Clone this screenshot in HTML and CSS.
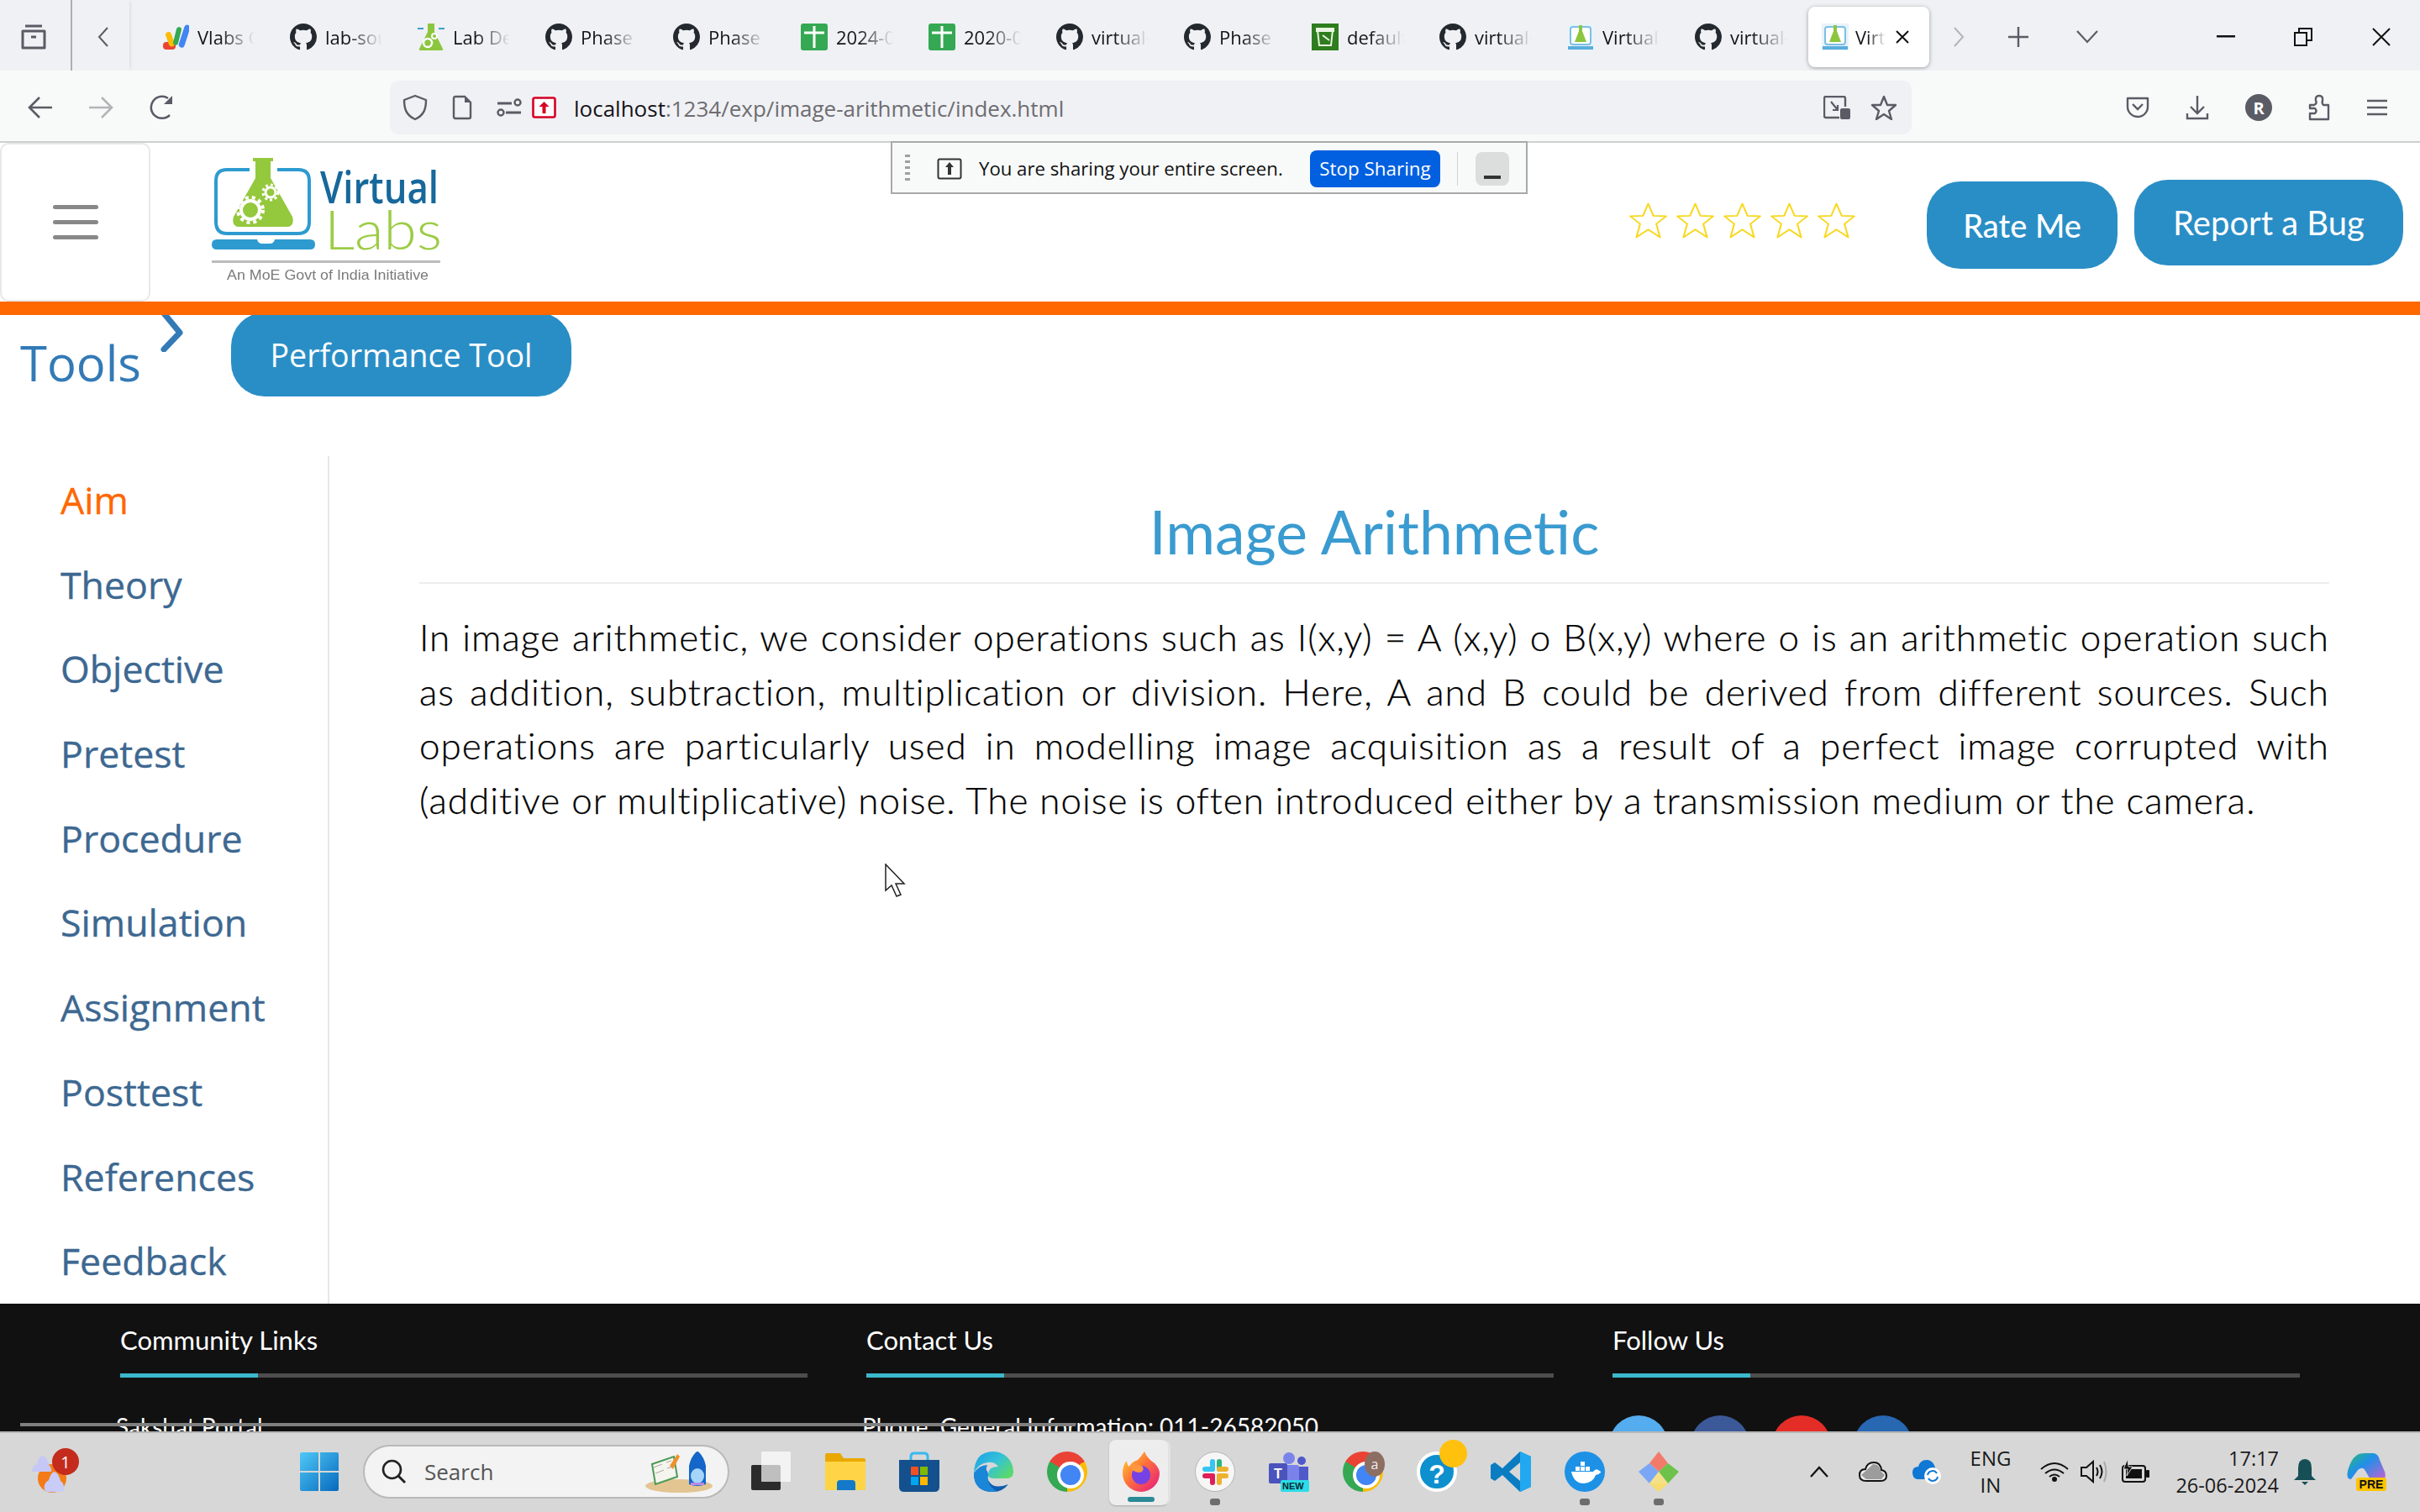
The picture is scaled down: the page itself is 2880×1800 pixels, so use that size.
FILE: index.html
```html
<!DOCTYPE html>
<html lang="en">
<head>
<meta charset="utf-8">
<title>Virtual Labs - Image Arithmetic</title>
<link rel="stylesheet" href="styles.css">
</head>
<body>
<svg class="defs" xmlns="http://www.w3.org/2000/svg">
  <symbol id="gh" viewBox="0 0 16 16"><path fill="#24292f" d="M8 0C3.58 0 0 3.58 0 8c0 3.54 2.29 6.53 5.47 7.59.4.07.55-.17.55-.38 0-.19-.01-.82-.01-1.49-2.01.37-2.53-.49-2.69-.94-.09-.23-.48-.94-.82-1.13-.28-.15-.68-.52-.01-.53.63-.01 1.08.58 1.23.82.72 1.21 1.87.87 2.33.66.07-.52.28-.87.51-1.07-1.78-.2-3.64-.89-3.64-3.95 0-.87.31-1.59.82-2.15-.08-.2-.36-1.02.08-2.12 0 0 .67-.21 2.2.82.64-.18 1.32-.27 2-.27.68 0 1.36.09 2 .27 1.53-1.04 2.2-.82 2.2-.82.44 1.1.16 1.92.08 2.12.51.56.82 1.27.82 2.15 0 3.07-1.87 3.75-3.65 3.95.29.25.54.73.54 1.48 0 1.07-.01 1.93-.01 2.2 0 .21.15.46.55.38A8.013 8.013 0 0016 8c0-4.42-3.58-8-8-8z"/></symbol>
  <symbol id="sheet" viewBox="0 0 32 32"><rect width="32" height="32" rx="3" fill="#34a853"/><path d="M16 3v26M4 11h24" stroke="#fff" stroke-width="3"/></symbol>
  <symbol id="vfav" viewBox="0 0 32 32"><rect width="32" height="32" fill="#e8f3fa"/><rect x="4" y="4" width="24" height="21" rx="3" fill="#fff" stroke="#7cc0e4" stroke-width="2"/><path d="M14 2h4v7l5 13H9l5-13z" fill="#8cc63f"/><rect x="1" y="27" width="30" height="4" fill="#58aede"/></symbol>
  <symbol id="star" viewBox="0 0 40 42" preserveAspectRatio="none"><path d="M20 1.500L25.500 15.500 39 16 28.500 25 32.500 40.500 20 31.500 7.500 40.500 11.500 25 1 16 14.500 15.500z" fill="#fff" stroke="#f9d71c" stroke-width="1.800" stroke-linejoin="round"/></symbol>
</svg>

<div class="window">
  <header class="tabbar">
    <div class="tb-left">
      <svg class="ic list-tabs" viewBox="0 0 30 32"><path d="M5 3h20M2 9h26v20H2zM12 16h6" fill="none" stroke="#5b5b66" stroke-width="3" stroke-linejoin="round"/></svg>
    </div>
    <div class="tb-scroll">
      <svg class="ic" width="14" height="24" viewBox="0 0 14 24"><path d="M12 1L2 12l10 11" fill="none" stroke="#5b5b66" stroke-width="2"/></svg>
    </div>
    <div class="tabs">
      <div class="tab"><svg class="fav" viewBox="0 0 32 32"><rect x="1" y="22" width="15" height="9" rx="4" fill="#ea4335"/><rect x="6" y="10" width="7" height="18" rx="3.500" fill="#fbbc04" transform="rotate(-20 9 19)"/><rect x="15" y="4" width="6" height="22" rx="3" fill="#34a853" transform="rotate(14 18 15)"/><rect x="23" y="1" width="7" height="28" rx="3.500" fill="#4285f4" transform="rotate(18 26 15)"/></svg><span class="tab-label">Vlabs Git</span></div>
      <div class="tab"><svg class="fav"><use href="#gh"/></svg><span class="tab-label">lab-source</span></div>
      <div class="tab"><svg class="fav" viewBox="0 0 32 32"><path d="M12 0h8v10l10 20q1 2-2 2H4q-3 0-2-2l10-20z" fill="#8cc63f"/><path d="M0 6h7M25 6h7" stroke="#3d9fcf" stroke-width="2"/><circle cx="12" cy="23" r="5" fill="none" stroke="#fff" stroke-width="2.500"/><circle cx="20" cy="15" r="3" fill="none" stroke="#fff" stroke-width="2"/></svg><span class="tab-label">Lab Dev</span></div>
      <div class="tab"><svg class="fav"><use href="#gh"/></svg><span class="tab-label">Phase 3</span></div>
      <div class="tab"><svg class="fav"><use href="#gh"/></svg><span class="tab-label">Phase 3</span></div>
      <div class="tab"><svg class="fav"><use href="#sheet"/></svg><span class="tab-label">2024-06</span></div>
      <div class="tab"><svg class="fav"><use href="#sheet"/></svg><span class="tab-label">2020-06</span></div>
      <div class="tab"><svg class="fav"><use href="#gh"/></svg><span class="tab-label">virtual-lab</span></div>
      <div class="tab"><svg class="fav"><use href="#gh"/></svg><span class="tab-label">Phase 3</span></div>
      <div class="tab"><svg class="fav" viewBox="0 0 32 32"><rect width="32" height="32" fill="#2e7d1e"/><path d="M7 8h18l-2 18H9zM6 6h20v3H6zM13 14l8 6" fill="none" stroke="#e8f5e0" stroke-width="2"/></svg><span class="tab-label">default</span></div>
      <div class="tab"><svg class="fav"><use href="#gh"/></svg><span class="tab-label">virtual-lab</span></div>
      <div class="tab"><svg class="fav"><use href="#vfav"/></svg><span class="tab-label">Virtual Labs</span></div>
      <div class="tab"><svg class="fav"><use href="#gh"/></svg><span class="tab-label">virtual-lab</span></div>
      <div class="tab tab-active"><svg class="fav"><use href="#vfav"/></svg><span class="tab-label tab-label-short">Virtual</span><svg class="tab-x" viewBox="0 0 18 18"><path d="M2 2l14 14M16 2L2 16" stroke="#111" stroke-width="2"/></svg></div>
    </div>
    <div class="tb-actions">
      <svg width="14" height="24" viewBox="0 0 14 24"><path d="M2 1l10 11L2 23" fill="none" stroke="#b4b4b8" stroke-width="2"/></svg>
      <svg class="tb-plus" width="26" height="26" viewBox="0 0 26 26"><path d="M13 1v24M1 13h24" stroke="#5b5b66" stroke-width="2.400"/></svg>
      <svg class="tb-down" width="26" height="16" viewBox="0 0 26 16"><path d="M1 1l12 13L25 1" fill="none" stroke="#5b5b66" stroke-width="2.200"/></svg>
    </div>
    <div class="win-controls">
      <svg width="22" height="4" viewBox="0 0 22 4"><rect width="22" height="2.500" fill="#111"/></svg>
      <svg width="22" height="22" viewBox="0 0 22 22"><path d="M1 6h14v15H1zM6 6V1h15v14h-6" fill="none" stroke="#111" stroke-width="2"/></svg>
      <svg width="24" height="24" viewBox="0 0 24 24"><path d="M2 2l20 20M22 2L2 22" stroke="#111" stroke-width="2"/></svg>
    </div>
  </header>

  <nav class="toolbar">
    <svg class="nav-back" width="30" height="28" viewBox="0 0 30 28"><path d="M29 14H3M14 2L2 14l12 12" fill="none" stroke="#5b5b66" stroke-width="2.600"/></svg>
    <svg class="nav-fwd" width="30" height="28" viewBox="0 0 30 28"><path d="M1 14h26M16 2l12 12-12 12" fill="none" stroke="#b4b4b8" stroke-width="2.600"/></svg>
    <svg class="nav-reload" width="30" height="30" viewBox="0 0 30 30"><path d="M24 24A13 13 0 1 1 22 4" fill="none" stroke="#5b5b66" stroke-width="2.600"/><path d="M27 1v10H17z" fill="#5b5b66"/></svg>
    <div class="urlbar">
      <svg width="30" height="32" viewBox="0 0 30 32"><path d="M15 2l13 5c0 10-2 18-13 23C4 25 2 17 2 7z" fill="none" stroke="#5b5b66" stroke-width="2.400" stroke-linejoin="round"/></svg>
      <svg class="url-page" width="24" height="30" viewBox="0 0 24 30"><path d="M2 4q0-2 2-2h11l7 7v17q0 2-2 2H4q-2 0-2-2z" fill="none" stroke="#5b5b66" stroke-width="2.400"/><path d="M15 2v7h7" fill="#5b5b66"/></svg>
      <svg class="url-perm" width="30" height="22" viewBox="0 0 30 22"><path d="M1 6h17M11 17h18" stroke="#5b5b66" stroke-width="3"/><circle cx="25" cy="5" r="3.500" fill="none" stroke="#5b5b66" stroke-width="2.400"/><circle cx="5" cy="17" r="3.500" fill="none" stroke="#5b5b66" stroke-width="2.400"/></svg>
      <svg class="url-share" width="29" height="26" viewBox="0 0 29 26"><rect x="1.500" y="1.500" width="26" height="23" rx="2" fill="#fff" stroke="#d70022" stroke-width="2.600"/><path d="M14.500 6l6 6h-4v8h-4v-8h-4z" fill="#d70022"/></svg>
      <span class="url-text"><span class="url-host">localhost</span>:1234/exp/image-arithmetic/index.html</span>
      <svg class="url-shot" width="32" height="28" viewBox="0 0 32 28"><path d="M19 26H3q-2 0-2-2V3q0-2 2-2h21q2 0 2 2v10" fill="none" stroke="#5b5b66" stroke-width="2.400"/><path d="M9 7l8 10M17 11v6h-6" fill="none" stroke="#5b5b66" stroke-width="2.200"/><rect x="20" y="15" width="12" height="13" rx="2" fill="#5b5b66"/></svg>
      <svg class="url-star" width="32" height="30" viewBox="0 0 32 30"><path d="M16 2l4 10h10l-8 7 3 10-9-6-9 6 3-10-8-7h10z" fill="none" stroke="#5b5b66" stroke-width="2.400" stroke-linejoin="round"/></svg>
    </div>
    <div class="tool-right">
      <svg width="28" height="26" viewBox="0 0 28 26"><path d="M2 2h24v10a12 12 0 0 1-24 0z" fill="none" stroke="#5b5b66" stroke-width="2.400" stroke-linejoin="round"/><path d="M8 9l6 6 6-6" fill="none" stroke="#5b5b66" stroke-width="2.400"/></svg>
      <svg width="28" height="30" viewBox="0 0 28 30"><path d="M14 1v21M6 14l8 8 8-8M2 22v6h24v-6" fill="none" stroke="#5b5b66" stroke-width="2.400"/></svg>
      <span class="avatar">R</span>
      <svg width="26" height="32" viewBox="0 0 26 32"><path d="M2 13h5q4-2 2-5-1-6 4-6 5 0 4 6-1 3 1 5h6v17H2v-7h6q3-3 0-6H2z" fill="none" stroke="#5b5b66" stroke-width="2.400" stroke-linejoin="round"/></svg>
      <svg width="26" height="20" viewBox="0 0 26 20"><path d="M1 2h24M1 10h24M1 18h24" stroke="#5b5b66" stroke-width="2.600"/></svg>
    </div>
  </nav>

  <main class="page">
    <div class="site-header">
      <div class="menu-box"><span class="menu-bars"><i></i><i></i><i></i></span></div>
      <svg class="logo" width="276" height="150" viewBox="0 0 276 150">
        <path d="M45 14H18Q5 14 5 27V76Q5 90 18 90H103Q116 90 116 76V27Q116 14 103 14H78" fill="none" stroke="#2e9bd0" stroke-width="4"/>
        <path d="M49 0h24v4h-3v20l26 46q3 12-7 12H33q-10 0-7-12l26-46V4h-3z" fill="#94c83d"/>
        <circle cx="46" cy="62" r="11" fill="none" stroke="#fff" stroke-width="4"/>
        <circle cx="46" cy="62" r="15" fill="none" stroke="#fff" stroke-width="4" stroke-dasharray="4 4"/>
        <circle cx="70" cy="41" r="6" fill="none" stroke="#fff" stroke-width="3"/>
        <circle cx="70" cy="41" r="9" fill="none" stroke="#fff" stroke-width="3" stroke-dasharray="3 3"/>
        <path d="M6 97h48q1 5 6 5h9q5 0 6-5h42q6 0 6 6t-6 6H6q-6 0-6-6t6-6z" fill="#2e9bd0"/>
        <text class="logo-virtual" x="129" y="54" textLength="141" lengthAdjust="spacingAndGlyphs">Virtual</text>
        <text class="logo-labs" x="134" y="109" textLength="140" lengthAdjust="spacingAndGlyphs">Labs</text>
        <rect y="122" width="272" height="3" fill="#bcbcbc"/>
        <text class="logo-tag" x="18" y="145" textLength="240" lengthAdjust="spacingAndGlyphs">An MoE Govt of India Initiative</text>
      </svg>
      <div class="stars">
        <svg class="star"><use href="#star"/></svg><svg class="star"><use href="#star"/></svg><svg class="star"><use href="#star"/></svg><svg class="star"><use href="#star"/></svg><svg class="star"><use href="#star"/></svg>
      </div>
      <a class="pill pill-rate">Rate Me</a>
      <a class="pill pill-bug">Report a Bug</a>
    </div>
    <div class="orange-rule"></div>
    <div class="tools-row">
      <span class="tools-label">Tools</span>
      <svg class="tools-chevron" width="28" height="44" viewBox="0 0 28 44"><path d="M4 -2L23 21 4 41" fill="none" stroke="#337ab7" stroke-width="7" stroke-linecap="round" stroke-linejoin="round"/></svg>
      <a class="perf-btn">Performance Tool</a>
    </div>
    <div class="lab-body">
      <aside class="side-nav">
        <a class="side-item side-active">Aim</a>
        <a class="side-item">Theory</a>
        <a class="side-item">Objective</a>
        <a class="side-item">Pretest</a>
        <a class="side-item">Procedure</a>
        <a class="side-item">Simulation</a>
        <a class="side-item">Assignment</a>
        <a class="side-item">Posttest</a>
        <a class="side-item">References</a>
        <a class="side-item">Feedback</a>
      </aside>
      <section class="article">
        <h1 class="article-title">Image Arithmetic</h1>
        <p class="article-text">
          <span class="text-line">In image arithmetic, we consider operations such as I(x,y) = A (x,y) o B(x,y) where o is an arithmetic operation such</span>
          <span class="text-line">as addition, subtraction, multiplication or division. Here, A and B could be derived from different sources. Such</span>
          <span class="text-line">operations are particularly used in modelling image acquisition as a result of a perfect image corrupted with</span>
          <span class="text-line-last">(additive or multiplicative) noise. The noise is often introduced either by a transmission medium or the camera.</span>
        </p>
      </section>
    </div>
    <footer class="site-footer">
      <div class="foot-col">
        <h2 class="foot-title">Community Links</h2>
        <div class="foot-bar"><span></span></div>
        <p class="foot-text">Sakshat Portal</p>
      </div>
      <div class="foot-col">
        <h2 class="foot-title">Contact Us</h2>
        <div class="foot-bar"><span></span></div>
        <p class="foot-text">Phone: General Information: 011-26582050</p>
      </div>
      <div class="foot-col">
        <h2 class="foot-title">Follow Us</h2>
        <div class="foot-bar"><span></span></div>
        <div class="socials"><i class="s-tw"></i><i class="s-fb"></i><i class="s-yt"></i><i class="s-li"></i></div>
      </div>
    </footer>
    <div class="h-scrollbar"></div>
  </main>

  <div class="taskbar">
    <div class="weather">
      <svg width="44" height="52" viewBox="0 0 44 52"><ellipse cx="24" cy="34" rx="17" ry="17" fill="#f47b16"/><path d="M0 26q0-7 6-9 2-10 7-10 5 1 7 11 4 3 3 8z" fill="#c5c8f5"/><path d="M15 48q-2-8 5-12 3-10 7-10 5 2 7 11 5 3 4 11-2 3-20 2z" fill="#c8ccf7"/></svg>
      <span class="weather-badge">1</span>
    </div>
    <svg class="start" width="46" height="46" viewBox="0 0 46 46"><defs><linearGradient id="wg" x1="0" y1="0" x2="1" y2="1"><stop offset="0" stop-color="#4fc8f7"/><stop offset="1" stop-color="#0669bd"/></linearGradient></defs><path d="M0 2q0-2 2-2h20v22H0zM24 0h20q2 0 2 2v20H24zM0 24h22v22H2q-2 0-2-2zM24 24h22v20q0 2-2 2H24z" fill="url(#wg)"/></svg>
    <div class="searchbox">
      <svg width="30" height="30" viewBox="0 0 30 30"><circle cx="12.500" cy="12.500" r="10.500" fill="none" stroke="#222" stroke-width="2.600"/><path d="M20 20l8 8" stroke="#222" stroke-width="3"/></svg>
      <span class="search-text">Search</span>
      <svg class="search-art" width="90" height="50" viewBox="0 0 90 50"><ellipse cx="42" cy="42" rx="40" ry="8" fill="#e3c592"/><path d="M10 16l26-9 4 24-26 9z" fill="#f5f5ef" stroke="#4d9a55" stroke-width="2"/><path d="M12 20l10-4M14 27l10-4M27 14l6-2M28 21l7-2" stroke="#a8a8a0"/><path d="M31 18l9-14 3 3-8 15z" fill="#f0922d"/><path d="M54 40V18q2-10 8-16 2-2 4 0 6 6 8 16v22q-10 4-20 0z" fill="#1466c8"/><ellipse cx="64" cy="30" rx="8" ry="9" fill="#a6d5fa"/><path d="M56 38h16v3H56z" fill="#b88be8"/></svg>
    </div>
    <div class="task-icons">
      <svg class="ti" viewBox="0 0 48 48"><rect x="0" y="16" width="35" height="30" rx="2" fill="#2b2b2b"/><rect x="12" y="0" width="35" height="36" rx="1" fill="#fff" fill-opacity=".7"/></svg>
      <svg class="ti" viewBox="0 0 48 48"><path d="M0 4q0-2 2-2h16l4 6h24q2 0 2 2v34q0 2-2 2H2q-2 0-2-2z" fill="#e9a800"/><path d="M0 12h48v32q0 2-2 2H2q-2 0-2-2z" fill="#ffd447"/><path d="M14 46V38q0-4 4-4h14q4 0 4 4v8z" fill="#1479c9"/></svg>
      <svg class="ti" viewBox="0 0 48 48"><path d="M14 10V6q0-4 4-4h12q4 0 4 4v4" fill="none" stroke="#37b9ee" stroke-width="3"/><path d="M0 10h48v32q0 6-6 6H6q-6 0-6-6z" fill="#14508e"/><rect x="14" y="18" width="9" height="10" fill="#f25022"/><rect x="25" y="18" width="9" height="10" fill="#7fba00"/><rect x="14" y="30" width="9" height="10" fill="#00a4ef"/><rect x="25" y="30" width="9" height="10" fill="#ffb900"/></svg>
      <svg class="ti" viewBox="0 0 48 48"><defs><linearGradient id="eg" x1="0" y1="0" x2="1" y2=".7"><stop offset="0" stop-color="#1a9fe6"/><stop offset=".55" stop-color="#35c1d8"/><stop offset="1" stop-color="#5ad96c"/></linearGradient></defs><path d="M24 0a24 24 0 0 1 24 24q0 8-8 8H26q-8 0-8-4 0-10 12-10-4-6-13-5Q5 15 1 26 2 0 24 0z" fill="url(#eg)"/><path d="M1 26q0 22 23 22 11 0 18-9-16 6-22-2-5-6-2-9-1-8-6-7-7 0-11 5z" fill="#0f5cb0"/><path d="M18 28q-2 12 10 19-3 1-6 1Q1 47 1 26q6-10 16-10-3 6 1 12z" fill="#1a86d8"/></svg>
      <span class="ti chrome"></span>
      <span class="ti ti-active-wrap"><svg class="ti-ff" viewBox="0 0 44 48"><defs><linearGradient id="ffg" x1="0" y1="0" x2="1" y2="1"><stop offset="0" stop-color="#ffdb2e"/><stop offset=".45" stop-color="#ff7139"/><stop offset="1" stop-color="#e31587"/></linearGradient></defs><path d="M26 0q3 8 12 14 6 6 6 12a22 22 0 0 1-44 0q0-10 5-15 0 5 3 7 3-6 10-8 4-4 8-10z" fill="url(#ffg)"/><circle cx="22" cy="28" r="11" fill="#7542e5"/><path d="M8 17q8-4 16 1 2 6-4 7-8 0-12-8z" fill="#ff9640"/></svg></span>
      <svg class="ti" viewBox="0 0 48 48"><circle cx="24" cy="24" r="23.500" fill="#f6f6f6" stroke="#b5b5b5"/><rect x="18" y="9" width="6" height="15" rx="3" fill="#36c5f0"/><rect x="9" y="18" width="15" height="6" rx="3" fill="#36c5f0"/><rect x="26" y="9" width="6" height="15" rx="3" fill="#2eb67d"/><rect x="26" y="18" width="14" height="6" rx="3" fill="#ecb22e"/><rect x="26" y="26" width="14" height="6" rx="3" fill="#ecb22e"/><rect x="26" y="26" width="6" height="14" rx="3" fill="#ecb22e"/><rect x="9" y="26" width="15" height="6" rx="3" fill="#e01e5a"/><rect x="18" y="26" width="6" height="14" rx="3" fill="#e01e5a"/></svg>
      <svg class="ti" viewBox="0 0 48 48"><circle cx="24" cy="8" r="7" fill="#7b83eb"/><circle cx="39" cy="11" r="5" fill="#5059c9"/><rect x="14" y="16" width="22" height="26" rx="2" fill="#7b83eb"/><rect x="36" y="18" width="11" height="20" fill="#5059c9"/><rect x="0" y="14" width="22" height="24" rx="2" fill="#4b53bc"/><text class="teams-t" x="11" y="32">T</text><rect x="14" y="34" width="34" height="14" rx="2" fill="#2bdde8"/><text class="teams-new" x="16" y="45">NEW</text></svg>
      <span class="ti chrome chrome-a"><span class="chrome-badge">a</span></span>
      <span class="ti help-wrap"><svg class="ti" viewBox="0 0 48 48"><circle cx="24" cy="24" r="22" fill="#0e8fce" stroke="#fff" stroke-width="4"/><text class="help-q" x="24" y="38">?</text></svg><i class="help-dot"></i></span>
      <svg class="ti" viewBox="0 0 48 48"><path d="M35 0l13 6v36l-13 6-21-20-9 7-5-3V16l5-3 9 7zM35 13L22 24l13 11z" fill="#0a7cc1"/><path d="M35 0l13 6v36l-13 6z" fill="#22a8f0"/></svg>
      <svg class="ti" viewBox="0 0 48 48"><circle cx="24" cy="24" r="24" fill="#1d91e6"/><path d="M8 24h26q3-4 6-2 4 2 3 3-3 3-6 3-3 9-14 10-12 0-15-14z" fill="#fff"/><path d="M13 18h5v5h-5zM19 18h5v5h-5zM25 18h5v5h-5zM19 12h5v5h-5z" fill="#fff"/></svg>
      <svg class="ti" viewBox="0 0 48 48"><path d="M24 0l11 14-11 10-11-10z" fill="#f27a6b"/><path d="M35 14l13 10-13 14-11-14z" fill="#6cc24a"/><path d="M13 14L0 24l13 14 11-14z" fill="#7aa7f5"/><path d="M13 38h22L24 48z" fill="#f7dc6f"/><path d="M24 24L13 38h22z" fill="#f5e08a"/></svg>
    </div>
    <i class="run-dot run-slack"></i><i class="run-dot run-docker"></i><i class="run-dot run-kraken"></i>
    <div class="tray">
      <svg class="t-caret" width="24" height="14" viewBox="0 0 24 14"><path d="M2 13L12 2l10 11" fill="none" stroke="#111" stroke-width="2.200"/></svg>
      <svg class="t-cloud" width="34" height="24" viewBox="0 0 34 24"><path d="M9 23q-8 0-8-7t7-7q2-8 10-8t9 9q6 1 6 7t-7 6z" fill="#eee" stroke="#111" stroke-width="2"/><path d="M17 3q8 0 9 8l5 5-4 5H9l-6-5z" fill="#9c9c9c"/></svg>
      <svg class="t-drive" width="34" height="30" viewBox="0 0 34 30"><path d="M6 24q-6-1-6-8t7-7q2-8 10-8 9 0 11 14l-8 9z" fill="#0f78d4"/><circle cx="24" cy="20" r="10" fill="#fff"/><path d="M18 19a6 6 0 0 1 11-2M30 21a6 6 0 0 1-11 2" fill="none" stroke="#0f78d4" stroke-width="2"/></svg>
      <div class="t-lang"><span>ENG</span><span>IN</span></div>
      <svg class="t-wifi" width="34" height="24" viewBox="0 0 34 24"><path d="M1 9q16-14 32 0M6 14q11-9 22 0M11 18q6-5 12 0" fill="none" stroke="#111" stroke-width="2"/><circle cx="17" cy="21" r="3" fill="#111"/></svg>
      <svg class="t-vol" width="32" height="28" viewBox="0 0 32 28"><path d="M1 9h6l8-7v24l-8-7H1z" fill="none" stroke="#111" stroke-width="2"/><path d="M19 9q3 5 0 10M23 6q5 8 0 16" fill="none" stroke="#111" stroke-width="2"/><path d="M28 2q5 12 0 24" fill="none" stroke="#aaa" stroke-width="2"/></svg>
      <svg class="t-batt" width="34" height="30" viewBox="0 0 34 30"><rect x="2" y="8" width="27" height="19" rx="3" fill="none" stroke="#111" stroke-width="2"/><path d="M6 12h19v11H6z" fill="#111"/><rect x="30" y="13" width="4" height="9" rx="1" fill="#111"/><path d="M8 0L3 12h5l-1 8 7-11H9z" fill="#111" stroke="#d6d6d6"/></svg>
      <div class="t-clock"><span>17:17</span><span>26-06-2024</span></div>
      <svg class="t-bell" width="26" height="31" viewBox="0 0 26 31"><path d="M13 0q8 0 8 11v9l5 5H0l5-5v-9Q5 0 13 0z" fill="#174f57"/><path d="M9 27h8l-4 4z" fill="#174f57"/></svg>
      <svg class="t-copilot" width="48" height="46" viewBox="0 0 48 46"><defs><linearGradient id="cpg" x1="0" y1="0" x2="1" y2="1"><stop offset="0" stop-color="#2fbd6e"/><stop offset=".4" stop-color="#1e90e8"/><stop offset="1" stop-color="#d85cd0"/></linearGradient></defs><path d="M6 32Q0 32 2 22 6 8 12 4q3-3 10-3h10q6 0 8 8l6 14q3 9-5 11l-10 2-8-14q-3-6-9-1z" fill="url(#cpg)"/><rect x="12" y="30" width="36" height="16" rx="3" fill="#ffc400"/><text class="pre" x="30" y="43">PRE</text></svg>
    </div>
  </div>

  <div class="share-bar">
    <span class="share-grip"></span>
    <svg width="30" height="26" viewBox="0 0 30 26"><rect x="1.500" y="1.500" width="27" height="23" rx="2" fill="none" stroke="#333" stroke-width="2"/><path d="M15 5l5 6h-3v9h-4v-9h-3z" fill="#333"/></svg>
    <span class="share-text">You are sharing your entire screen.</span>
    <a class="share-stop">Stop Sharing</a>
    <span class="share-sep"></span>
    <span class="share-min"><i></i></span>
  </div>
  <svg class="cursor" width="28" height="40" viewBox="0 0 28 40"><path d="M2 1v31l7-6 6 13 5-2-6-13h10z" fill="#fff" stroke="#222" stroke-width="1.500"/></svg>
</div>
</body>
</html>
```

FILE: styles.css
```css
* { box-sizing: border-box; }
html, body { margin: 0; padding: 0; background: #fff; }
.defs { display: none; }
.window {
  position: relative;
  width: 2880px;
  height: 1800px;
  overflow: hidden;
  display: flex;
  flex-direction: column;
  font-family: "Open Sans", "Noto Sans", sans-serif;
}

/* Tab bar */
.tabbar {
  height: 84px;
  flex: none;
  display: flex;
  align-items: stretch;
  background: #f0f1f4;
}
.tb-left {
  width: 86px;
  padding: 4px 0 0 25px;
  display: flex;
  align-items: center;
  border-right: 2px solid #aeaeb2;
}
.list-tabs { width: 30px; height: 32px; }
.tb-scroll {
  width: 68px;
  padding: 4px 0 0 30px;
  display: flex;
  align-items: center;
  box-shadow: 3px 0 3px -2px #d8d8d8;
}
.tabs { display: flex; align-items: center; padding: 4px 0 0 19px; }
.tab {
  width: 152px;
  height: 72px;
  padding-left: 20px;
  display: flex;
  align-items: center;
  gap: 10px;
}
.fav { width: 32px; height: 32px; flex: none; }
.tab-label {
  width: 68px;
  white-space: nowrap;
  overflow: hidden;
  font-size: 22px;
  color: #15141a;
  -webkit-mask-image: linear-gradient(to right, #000 40%, transparent 100%);
  mask-image: linear-gradient(to right, #000 40%, transparent 100%);
}
.tab-active {
  width: 144px;
  margin-left: 3px;
  padding-left: 16px;
  background: #fff;
  border-radius: 8px;
  box-shadow: 0 1px 5px rgba(0,0,0,.35);
  gap: 8px;
}
.tab-label-short { width: 36px; }
.tab-x { width: 18px; height: 18px; margin-left: 3px; }
.tb-actions { display: flex; align-items: center; margin-left: 28px; padding-top: 4px; }
.tb-plus { margin-left: 51px; }
.tb-down { margin-left: 56px; }
.win-controls { margin-left: auto; display: flex; align-items: center; gap: 70px; padding: 4px 34px 0 0; }

/* Toolbar */
.toolbar {
  height: 86px;
  flex: none;
  display: flex;
  align-items: center;
  padding: 4px 0 0 33px;
  background: #f8faf9;
  border-bottom: 2px solid #cfcfd0;
}
.nav-fwd { margin-left: 42px; }
.nav-reload { margin-left: 43px; }
.urlbar {
  margin-left: 256px;
  width: 1811px;
  height: 64px;
  padding: 0 17px 0 15px;
  display: flex;
  align-items: center;
  background: #f0f1f4;
  border-radius: 10px;
}
.url-page { margin-left: 29px; }
.url-perm { margin-left: 29px; }
.url-share { margin-left: 12px; }
.url-text { margin: 2px 0 0 21px; font-size: 26px; color: #6d6d72; white-space: nowrap; }
.url-host { color: #15141a; }
.url-shot { margin-left: auto; }
.url-star { margin-left: 24px; }
.tool-right { display: flex; align-items: center; margin-left: 255px; gap: 43px; }
.avatar {
  width: 32px;
  height: 32px;
  border-radius: 50%;
  background: #5b5b66;
  color: #fff;
  font-size: 20px;
  font-weight: 700;
  display: flex;
  align-items: center;
  justify-content: center;
}

/* Page */
.page { flex: 1; position: relative; display: flex; flex-direction: column; overflow: hidden; background: #fff; }
.site-header { height: 189px; flex: none; display: flex; align-items: flex-start; }
.menu-box {
  width: 179px;
  height: 189px;
  border: 2px solid #e8e8e8;
  border-radius: 10px;
  display: flex;
  align-items: center;
  justify-content: center;
}
.menu-bars { display: flex; flex-direction: column; gap: 13px; }
.menu-bars i { width: 54px; height: 5px; border-radius: 3px; background: #888; display: block; }
.logo { margin: 18px 0 0 73px; filter: blur(.4px); }
.logo-virtual { font: 600 52px "Open Sans", sans-serif; fill: #17689b; }
.logo-labs { font: 300 66px "Lato", sans-serif; fill: #9ccc45; }
.logo-tag { font: 500 17px "Liberation Sans", sans-serif; fill: #7a7a7a; }
.stars { display: flex; gap: 11px; margin: 71px 85px 0 auto; }
.star { width: 45px; height: 43px; }
.pill {
  display: flex;
  align-items: center;
  justify-content: center;
  background: #2a8ec6;
  color: #fff;
  border-radius: 40px;
  font-family: "Lato", sans-serif;
}
.pill-rate { width: 227px; height: 104px; margin-top: 46px; font-weight: 500; font-size: 38px; }
.pill-bug { width: 320px; height: 102px; margin: 44px 20px 0; font-weight: 400; font-size: 40px; }
.orange-rule { height: 16px; flex: none; background: #ff6700; position: relative; z-index: 2; }
.tools-row { height: 168px; flex: none; display: flex; align-items: flex-start; padding-left: 24px; }
.tools-label { font-size: 58px; font-weight: 400; line-height: 82px; margin-top: 16px; color: #337ab7; }
.tools-chevron { margin-left: 23px; flex: none; }
.perf-btn {
  margin: -3px 0 0 56px;
  width: 405px;
  height: 100px;
  display: flex;
  align-items: center;
  justify-content: center;
  border-radius: 40px;
  background: #2a8ec6;
  color: #fff;
  font-size: 37.500px;
}
.lab-body { height: 1009px; flex: none; display: flex; }
.side-nav {
  width: 392px;
  flex: none;
  padding: 2px 0 0 72px;
  border-right: 2px solid #e8e8e8;
  display: flex;
  flex-direction: column;
}
.side-item { height: 100.700px; line-height: 100px; font-size: 44.700px; font-weight: 400; -webkit-text-stroke: .35px currentColor; color: #3d6891; flex: none; }
.side-active { color: #ff6700; }
.article { flex: 1; padding: 0 108px 0 107px; }
.article-title {
  margin: 0;
  height: 152px;
  padding-top: 44px;
  text-align: center;
  font: 400 71.500px/90px "Lato", sans-serif;
  color: #3a9bd0;
  border-bottom: 2px solid #eceeee;
}
.article-text {
  margin: 31px 0 0;
  font: 300 44px/64.500px "Lato", sans-serif;
  letter-spacing: .98px;
  -webkit-text-stroke: .25px #000;
  color: #000;
}
.text-line, .text-line-last { display: block; white-space: normal; }
.text-line { text-align: justify; text-align-last: justify; }
.site-footer {
  flex: 1;
  background: #111;
  padding: 0 0 0 143px;
  display: grid;
  grid-template-columns: repeat(3, 818px);
  column-gap: 70px;
  overflow: hidden;
}
.foot-col { height: 220px; }
.foot-title { margin: 22px 0 0; font: 400 31px/42px "Lato", sans-serif; color: #fff; }
.foot-bar { margin-top: 19px; height: 5px; background: #4d4d4d; }
.foot-bar span { display: block; width: 164px; height: 5px; background: #3cb8cd; }
.foot-text { margin: 39px 0 0 -5px; font: 400 28px/38px "Lato", sans-serif; color: #fff; white-space: nowrap; }
.socials { display: flex; gap: 27px; margin: 45px 0 0 -4px; }
.socials i { width: 70px; height: 70px; border-radius: 50%; display: block; }
.s-tw { background: #55acee; }
.s-fb { background: #3b5998; }
.s-yt { background: #e52d27; }
.s-li { background: #2867b2; }
.h-scrollbar {
  position: absolute;
  left: 24px;
  bottom: 6px;
  width: 1256px;
  height: 4px;
  background: #808080;
}

/* Taskbar */
.taskbar {
  height: 96px;
  flex: none;
  position: relative;
  display: flex;
  align-items: center;
  padding: 0 40px 2px 38px;
  background: #d7d7d7;
  border-top: 2px solid #b6b6b6;
}
.weather { position: relative; width: 58px; height: 52px; flex: none; }
.weather svg { display: block; }
.weather-badge {
  position: absolute;
  left: 24px;
  top: -2px;
  width: 32px;
  height: 32px;
  border-radius: 50%;
  background: #c42b1c;
  color: #fff;
  font-size: 20px;
  display: flex;
  align-items: center;
  justify-content: center;
}
.start { margin-left: 261px; flex: none; margin-right: 2px; }
.searchbox {
  margin-left: 27px;
  width: 436px;
  height: 64px;
  padding: 0 10px 0 20px;
  display: flex;
  align-items: center;
  background: #f3f3f3;
  border: 2px solid #b9b9b9;
  border-radius: 32px;
  flex: none;
}
.search-text { margin-left: 21px; font-size: 26px; color: #555; }
.search-art { margin-left: auto; }
.task-icons { margin-left: 26px; display: flex; align-items: center; gap: 40px; flex: none; }
.ti { width: 48px; height: 48px; display: block; flex: none; }
.chrome {
  position: relative;
  border-radius: 50%;
  background: conic-gradient(#ea4335 0 60deg, #fbbc04 60deg 180deg, #34a853 180deg 300deg, #ea4335 300deg);
}
.chrome::after {
  content: "";
  position: absolute;
  left: 12px;
  top: 12px;
  width: 24px;
  height: 24px;
  border-radius: 50%;
  background: #4285f4;
  border: 4px solid #fff;
}
.chrome-badge {
  position: absolute;
  z-index: 1;
  right: -2px;
  top: 0;
  width: 24px;
  height: 30px;
  border-radius: 50%;
  background: #8d6e63;
  color: #eee;
  font-size: 16px;
  display: flex;
  align-items: center;
  justify-content: center;
}
.ti-active-wrap { position: relative; display: flex; justify-content: center; }
.ti-active-wrap::before {
  content: "";
  position: absolute;
  left: -14px;
  top: -14px;
  width: 70px;
  height: 78px;
  background: #ededed;
  border-radius: 8px;
  box-shadow: 4px 0 0 -1px #e2e2e2, 0 1px 2px #aaa;
}
.ti-active-wrap::after {
  content: "";
  position: absolute;
  left: 8px;
  bottom: -12px;
  width: 32px;
  height: 6px;
  border-radius: 3px;
  background: #2a8a96;
}
.ti-ff { position: relative; width: 44px; height: 48px; }
.teams-t { font: 700 16px "Liberation Sans", sans-serif; fill: #fff; text-anchor: middle; }
.teams-new { font: 700 11px "Liberation Sans", sans-serif; fill: #0a2a33; }
.help-wrap { position: relative; }
.help-q { font: 700 32px "Liberation Sans", sans-serif; fill: #fff; text-anchor: middle; }
.help-dot { position: absolute; right: -12px; top: -14px; width: 33px; height: 33px; border-radius: 50%; background: #ffc10e; }
.run-dot { position: absolute; top: 78px; width: 12px; height: 8px; border-radius: 3px; background: #6d6d6d; }
.run-slack { left: 1440px; }
.run-docker { left: 1880px; }
.run-kraken { left: 1968px; }
.tray { margin-left: auto; display: flex; align-items: center; flex: none; }
.t-cloud { margin-left: 35px; }
.t-drive { margin-left: 30px; }
.t-lang, .t-clock { display: flex; flex-direction: column; font-size: 24px; line-height: 32px; color: #1a1a1a; }
.t-lang { margin-left: 36px; width: 46px; align-items: center; }
.t-wifi { margin-left: 36px; }
.t-vol { margin-left: 14px; }
.t-batt { margin-left: 16px; }
.t-clock { margin-left: 22px; width: 132px; align-items: flex-end; font-size: 23.500px; }
.t-bell { margin-left: 18px; }
.t-copilot { margin-left: 36px; }
.pre { font: 700 14px "Liberation Sans", sans-serif; fill: #111; text-anchor: middle; }

/* Overlays */
.share-bar {
  position: absolute;
  left: 1060px;
  top: 168px;
  width: 758px;
  height: 63px;
  display: flex;
  align-items: center;
  padding: 2px 20px 0 15px;
  background: #f8faf9;
  border: 2px solid #a9a9a9;
  z-index: 5;
}
.share-grip { width: 6px; height: 34px; background: repeating-linear-gradient(to bottom, #a0a0a0 0 3px, transparent 3px 7px); margin-right: 32px; }
.share-text { margin-left: 20px; font-size: 22.200px; color: #111; white-space: nowrap; }
.share-stop {
  margin-left: auto;
  width: 155px;
  height: 44px;
  display: flex;
  align-items: center;
  justify-content: center;
  background: #0060df;
  color: #fff;
  border-radius: 8px;
  font-size: 22.400px;
}
.share-sep { width: 1px; height: 40px; background: #cfcfcf; margin-left: 20px; }
.share-min { width: 40px; height: 40px; margin-left: 21px; background: #dcdede; border-radius: 8px; position: relative; }
.share-min i { position: absolute; left: 10px; top: 28px; width: 20px; height: 4px; background: #333; }
.cursor { position: absolute; left: 1052px; top: 1028px; z-index: 6; }
```
